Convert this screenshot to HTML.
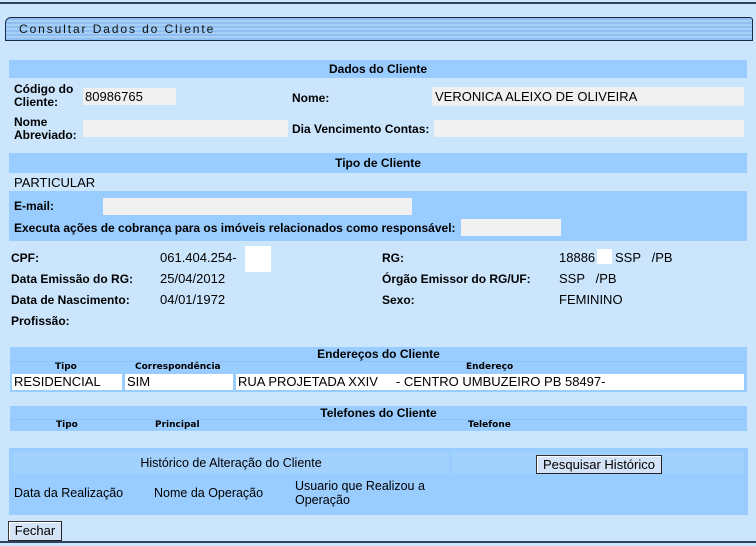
<!DOCTYPE html>
<html><head><meta charset="utf-8"><style>
*{margin:0;padding:0;box-sizing:border-box}
body{width:756px;height:546px;background:#cbe5fd;font-family:"Liberation Sans",Arial,sans-serif;font-size:12px;color:#000;position:relative;overflow:hidden}
.a{position:absolute}
.h{background:#99ccff}
.b{font-weight:bold}
.f{background:#f0f0f0}
.w{background:#fff}
.c{text-align:center}
.v{font-size:13px}
.s{font-size:9px;font-weight:bold;font-family:"DejaVu Sans",sans-serif}
.m{font-size:12.5px}
.btn{background:#d4e4f6;border:1px solid #333;border-right-color:#222;border-bottom-color:#222;box-shadow:inset 1px 1px 0 #fff;font-size:13px;text-align:center}
</style></head><body>
<div class="a" style="left:0;top:2px;width:756px;height:2px;background:#2c4461"></div>
<div class="a" style="left:0;top:541px;width:756px;height:2px;background:#2c4461"></div>
<div class="a" style="left:5px;top:17px;width:748px;height:24px;border:1px solid #1a2a40;border-radius:6px 3px 0 0;background:repeating-linear-gradient(#8ebff0 0,#8ebff0 2px,#a8d0f6 2px,#a8d0f6 4px)"></div>
<div class="a" style="left:19px;top:22px;font-size:12px;letter-spacing:1.9px;color:#111">Consultar Dados do Cliente</div>

<div class="a h" style="left:9px;top:60px;width:738px;height:18px"></div>
<div class="a b c" style="left:9px;top:62px;width:738px">Dados do Cliente</div>
<div class="a b" style="left:14px;top:83px;line-height:13px">Código do<br>Cliente:</div>
<div class="a f v" style="left:83px;top:88px;width:93px;height:17px;padding:1px 2px">80986765</div>
<div class="a b" style="left:292px;top:91px">Nome:</div>
<div class="a f v" style="left:432px;top:87px;width:312px;height:19px;padding:2px 3px">VERONICA ALEIXO DE OLIVEIRA</div>
<div class="a b" style="left:14px;top:116px;line-height:13px">Nome<br>Abreviado:</div>
<div class="a f" style="left:83px;top:120px;width:205px;height:17px"></div>
<div class="a b" style="left:292px;top:122px">Dia Vencimento Contas:</div>
<div class="a f" style="left:434px;top:120px;width:310px;height:17px"></div>

<div class="a h" style="left:9px;top:153px;width:738px;height:20px"></div>
<div class="a b c" style="left:9px;top:156px;width:738px">Tipo de Cliente</div>
<div class="a v" style="left:14px;top:175px">PARTICULAR</div>
<div class="a h" style="left:9px;top:191px;width:738px;height:50px"></div>
<div class="a b" style="left:14px;top:199px">E-mail:</div>
<div class="a f" style="left:103px;top:198px;width:309px;height:17px"></div>
<div class="a b" style="left:14px;top:221px">Executa ações de cobrança para os imóveis relacionados como responsável:</div>
<div class="a f" style="left:461px;top:219px;width:100px;height:17px"></div>

<div class="a b" style="left:11px;top:251px">CPF:</div>
<div class="a v" style="left:160px;top:250px">061.404.254-</div>
<div class="a w" style="left:245px;top:246px;width:26px;height:26px"></div>
<div class="a b" style="left:11px;top:272px">Data Emissão do RG:</div>
<div class="a v" style="left:160px;top:271px">25/04/2012</div>
<div class="a b" style="left:11px;top:293px">Data de Nascimento:</div>
<div class="a v" style="left:160px;top:292px">04/01/1972</div>
<div class="a b" style="left:11px;top:314px">Profissão:</div>
<div class="a b" style="left:382px;top:251px">RG:</div>
<div class="a v" style="left:559px;top:250px">18886</div>
<div class="a w" style="left:597px;top:249px;width:15px;height:15px"></div>
<div class="a v" style="left:615px;top:250px">SSP &nbsp; /PB</div>
<div class="a b" style="left:382px;top:272px">Órgão Emissor do RG/UF:</div>
<div class="a v" style="left:559px;top:271px">SSP &nbsp; /PB</div>
<div class="a b" style="left:382px;top:293px">Sexo:</div>
<div class="a v" style="left:559px;top:292px">FEMININO</div>

<div class="a h" style="left:10px;top:347px;width:737px;height:45px"></div>
<div class="a b c" style="left:10px;top:347px;width:737px">Endereços do Cliente</div>
<div class="a" style="left:10px;top:361px;width:737px;height:1px;background:#8ec3f7"></div>
<div class="a s" style="left:55px;top:362px">Tipo</div>
<div class="a s" style="left:135px;top:362px">Correspondência</div>
<div class="a s" style="left:466px;top:362px">Endereço</div>
<div class="a w v" style="left:12px;top:374px;width:110px;height:16px;padding-left:2px">RESIDENCIAL</div>
<div class="a w v" style="left:125px;top:374px;width:108px;height:16px;padding-left:2px">SIM</div>
<div class="a w v" style="left:236px;top:374px;width:508px;height:16px;padding-left:2px">RUA PROJETADA XXIV &nbsp; &nbsp; - CENTRO UMBUZEIRO PB 58497-</div>

<div class="a h" style="left:10px;top:406px;width:737px;height:25px"></div>
<div class="a b c" style="left:10px;top:406px;width:737px">Telefones do Cliente</div>
<div class="a" style="left:10px;top:419px;width:737px;height:1px;background:#8ec3f7"></div>
<div class="a s" style="left:56px;top:420px">Tipo</div>
<div class="a s" style="left:155px;top:420px">Principal</div>
<div class="a s" style="left:468px;top:420px">Telefone</div>

<div class="a h" style="left:9px;top:448px;width:739px;height:67px"></div>
<div class="a" style="left:13px;top:452px;width:436px;height:22px;background:#a3d1fd"></div>
<div class="a" style="left:452px;top:452px;width:292px;height:22px;background:#a3d1fd"></div>
<div class="a c m" style="left:13px;top:456px;width:436px">Histórico de Alteração do Cliente</div>
<div class="a btn" style="left:536px;top:455px;width:126px;height:19px;line-height:17px">Pesquisar Histórico</div>
<div class="a m" style="left:14px;top:486px">Data da Realização</div>
<div class="a m" style="left:154px;top:486px">Nome da Operação</div>
<div class="a m" style="left:295px;top:479px;line-height:14px">Usuario que Realizou a<br>Operação</div>

<div class="a btn" style="left:8px;top:521px;width:54px;height:20px;line-height:18px">Fechar</div>
</body></html>
